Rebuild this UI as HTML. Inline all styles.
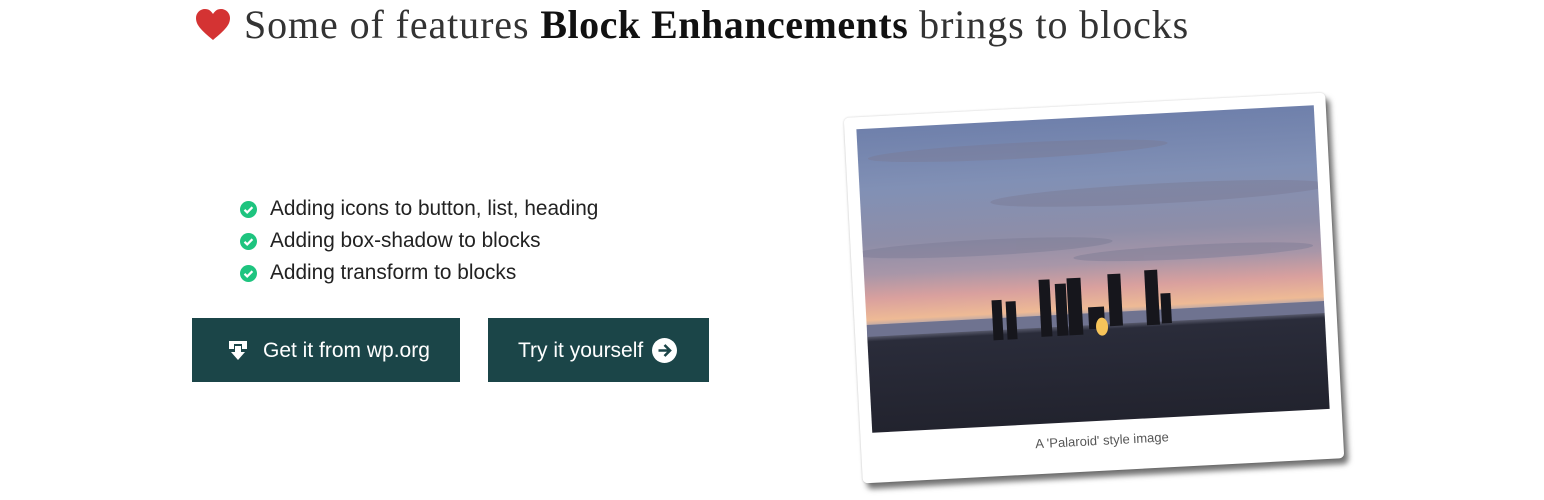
<!DOCTYPE html>
<html><head><meta charset="utf-8"><style>
html,body{margin:0;padding:0;background:#fff;width:1544px;height:500px;overflow:hidden;position:relative}
h1{position:absolute;left:195px;top:0;margin:0;font-family:"Liberation Serif",serif;font-weight:300;font-size:40px;letter-spacing:0.9px;line-height:50px;color:#333;white-space:nowrap}
h1 b{color:#111;font-weight:700;letter-spacing:0.5px}
.heart{position:absolute;left:195px;top:9px}
ul{position:absolute;left:240px;top:193px;margin:0;padding:0;list-style:none;font-family:"Liberation Sans",sans-serif;font-size:20.8px;color:#222}
li{height:32px;line-height:32px;position:relative;padding-left:30px}
li svg{position:absolute;left:0;top:8px}
.btn{position:absolute;top:318px;height:64px;background:#1b4548;color:#fff;font-family:"Liberation Sans",sans-serif;font-size:21px;line-height:66px;box-sizing:border-box}
.pol{position:absolute;left:853px;top:105px;width:482px;height:366px;background:#fff;border-radius:5px;transform:rotate(-3deg);box-shadow:4px 6px 6px rgba(0,0,0,.55),0 0 2px rgba(0,0,0,.2)}
.img{position:absolute;left:12px;top:12px;width:458px;height:304px;overflow:hidden;
background:linear-gradient(180deg,#6f80ab 0%,#8190b5 20%,#8e8ea8 38%,#a896a8 48%,#d9a09e 56%,#eeba95 63%,#9a9cb4 66%,#2a2c3a 70%,#22232e 100%)}
.cap{position:absolute;left:0;right:0;top:328px;text-align:center;font-family:"Liberation Sans",sans-serif;font-size:13px;color:#555}
</style></head><body>
<svg class="heart" width="36" height="32" viewBox="0 0 36 32"><path d="M18 31 C6 21 1 16 1 9 C1 4 5 0 10 0 C14 0 16 2 18 5 C20 2 22 0 26 0 C31 0 35 4 35 9 C35 16 30 21 18 31Z" fill="#d43333"/></svg>
<h1><span style="margin-left:49px">Some of features </span><b>Block Enhancements</b> brings to blocks</h1>
<ul>
<li><svg width="17" height="17" viewBox="0 0 17 17"><circle cx="8.5" cy="8.5" r="8.5" fill="#1ec47f"/><path d="M4.5 8.8l2.7 2.6 5.2-5.2" stroke="#fff" stroke-width="2.2" fill="none"/></svg>Adding icons to button, list, heading</li>
<li><svg width="17" height="17" viewBox="0 0 17 17"><circle cx="8.5" cy="8.5" r="8.5" fill="#1ec47f"/><path d="M4.5 8.8l2.7 2.6 5.2-5.2" stroke="#fff" stroke-width="2.2" fill="none"/></svg>Adding box-shadow to blocks</li>
<li><svg width="17" height="17" viewBox="0 0 17 17"><circle cx="8.5" cy="8.5" r="8.5" fill="#1ec47f"/><path d="M4.5 8.8l2.7 2.6 5.2-5.2" stroke="#fff" stroke-width="2.2" fill="none"/></svg>Adding transform to blocks</li>
</ul>
<div class="btn" style="left:192px;width:268px;padding-left:71px">
<svg style="position:absolute;left:36px;top:22px" width="20" height="22" viewBox="0 0 20 22"><path d="M1 1h18v8h-5v-5h-8v5h-5z" fill="#fff"/><path d="M7 6h6v6h4l-7 8-7-8h4z" fill="#fff"/></svg>Get it from wp.org</div>
<div class="btn" style="left:488px;width:221px;padding-left:30px">Try it yourself
<svg style="position:absolute;left:164px;top:20px" width="25" height="25" viewBox="0 0 25 25"><circle cx="12.5" cy="12.5" r="12.5" fill="#fff"/><path d="M6.5 12.5h11M12.5 7l5.5 5.5-5.5 5.5" stroke="#1b4548" stroke-width="2.6" fill="none"/></svg></div>
<div class="pol"><div class="img">
<svg width="458" height="304" viewBox="0 0 458 304" style="position:absolute;left:0;top:0">
<g fill="#7a7a94" opacity=".45"><ellipse cx="160" cy="30" rx="150" ry="8"/><ellipse cx="300" cy="80" rx="170" ry="10"/><ellipse cx="120" cy="125" rx="130" ry="8"/><ellipse cx="330" cy="140" rx="120" ry="7"/></g>
<rect x="0" y="196" width="458" height="12" fill="#6f7390"/>
<g fill="#16161c"><rect x="126" y="178" width="10" height="40"/><rect x="140" y="180" width="10" height="38"/><rect x="174" y="160" width="11" height="57"/><rect x="190" y="165" width="11" height="52"/><rect x="202" y="160" width="14" height="57"/><rect x="243" y="158" width="13" height="52"/><rect x="280" y="156" width="13" height="55"/><rect x="295" y="180" width="10" height="30"/><rect x="222" y="190" width="16" height="22"/></g>
<ellipse cx="235" cy="210" rx="6" ry="9" fill="#f7c45a"/>
</svg></div>
<div class="cap">A 'Palaroid' style image</div></div>
</body></html>
